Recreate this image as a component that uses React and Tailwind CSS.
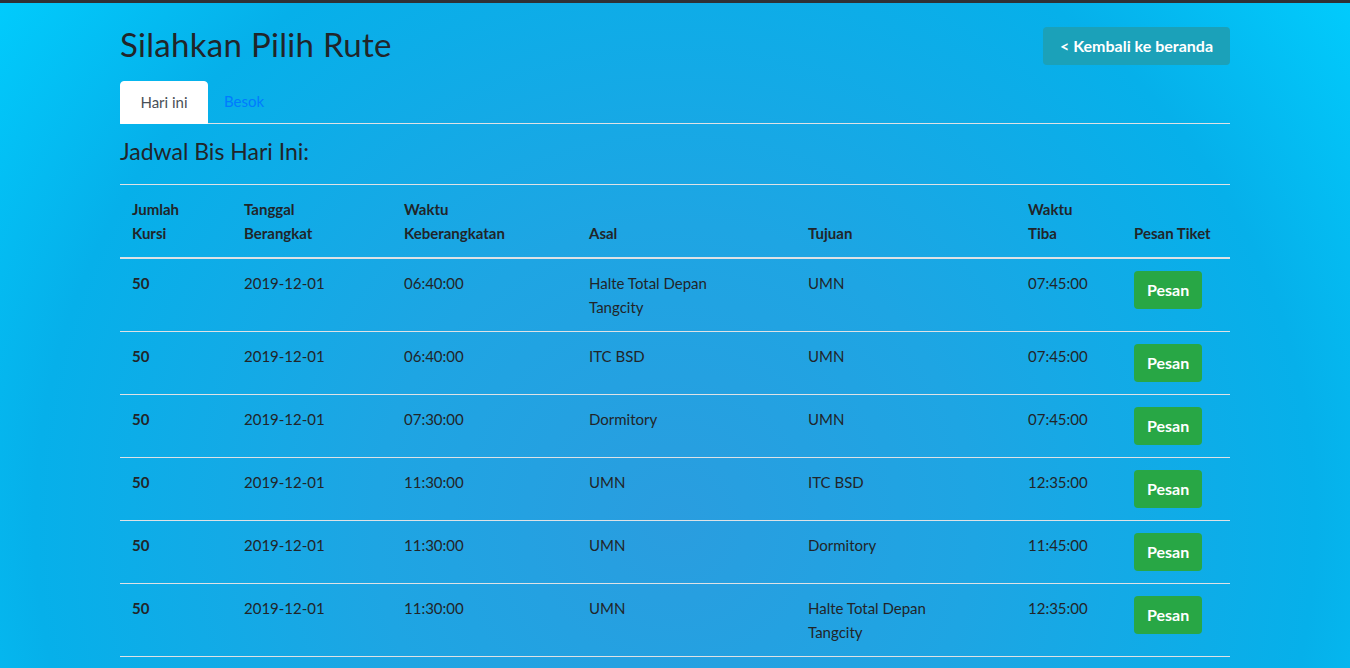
import React from "react";

const rows = [
  { kursi: 50, tanggal: "2019-12-01", berangkat: "06:40:00", asal: "Halte Total Depan Tangcity", tujuan: "UMN", tiba: "07:45:00" },
  { kursi: 50, tanggal: "2019-12-01", berangkat: "06:40:00", asal: "ITC BSD", tujuan: "UMN", tiba: "07:45:00" },
  { kursi: 50, tanggal: "2019-12-01", berangkat: "07:30:00", asal: "Dormitory", tujuan: "UMN", tiba: "07:45:00" },
  { kursi: 50, tanggal: "2019-12-01", berangkat: "11:30:00", asal: "UMN", tujuan: "ITC BSD", tiba: "12:35:00" },
  { kursi: 50, tanggal: "2019-12-01", berangkat: "11:30:00", asal: "UMN", tujuan: "Dormitory", tiba: "11:45:00" },
  { kursi: 50, tanggal: "2019-12-01", berangkat: "11:30:00", asal: "UMN", tujuan: "Halte Total Depan Tangcity", tiba: "12:35:00" },
];

export default function App() {
  return (
    <div className="min-h-screen border-t-[3px] border-[#2f3136] bg-[radial-gradient(circle_at_50%_75%,#2a9ddf_0px,#1ea5e3_300px,#06b0ea_640px,#00cfff_880px)] font-['Lato',sans-serif] text-[#212529]">
      <div className="mx-auto w-[1110px] pb-10">
        {/* Header */}
        <div className="flex items-start justify-between pt-[19px]">
          <h1 className="text-[33px] leading-[44px] font-normal tracking-[0.3px]">Silahkan Pilih Rute</h1>
          <button className="mt-[5px] h-[38px] rounded bg-[#1ba1b9] px-[17px] text-[16px] font-bold text-white">
            &lt; Kembali ke beranda
          </button>
        </div>

        {/* Tabs */}
        <div className="mt-[15px] flex border-b border-[#dee2e6] text-[15px]">
          <div className="-mb-px flex h-[43px] w-[88px] items-center justify-center rounded-t border border-white bg-white pb-px text-[#495057]">
            Hari ini
          </div>
          <div className="flex h-[42px] items-center px-4 pb-px text-[#007bff]">Besok</div>
        </div>

        <h4 className="mt-[11px] text-[23px] leading-[32px] font-normal">Jadwal Bis Hari Ini:</h4>

        {/* Table */}
        <table className="mt-[17px] w-full table-fixed border-collapse text-left text-[15px] leading-6">
          <colgroup>
            <col className="w-[112px]" />
            <col className="w-[160px]" />
            <col className="w-[185px]" />
            <col className="w-[219px]" />
            <col className="w-[220px]" />
            <col className="w-[106px]" />
            <col className="w-[108px]" />
          </colgroup>
          <thead>
            <tr className="border-t border-[#dee2e6]">
              {[["Jumlah", "Kursi"], ["Tanggal", "Berangkat"], ["Waktu", "Keberangkatan"], ["Asal"], ["Tujuan"], ["Waktu", "Tiba"], ["Pesan Tiket"]].map((h, i) => (
                <th key={i} className="border-b-2 border-[#dee2e6] p-3 align-bottom font-bold">
                  {h.map((l, j) => (
                    <div key={j}>{l}</div>
                  ))}
                </th>
              ))}
            </tr>
          </thead>
          <tbody>
            {rows.map((r, i) => (
              <tr key={i} className="border-b border-[#dee2e6] align-top">
                <td className="p-3 font-bold">{r.kursi}</td>
                <td className="p-3">{r.tanggal}</td>
                <td className="p-3">{r.berangkat}</td>
                <td className="p-3 pr-10">{r.asal}</td>
                <td className="p-3 pr-10">{r.tujuan}</td>
                <td className="p-3">{r.tiba}</td>
                <td className="p-3">
                  <button className="h-[38px] rounded bg-[#28a745] px-[13px] text-[16px] font-bold text-white">Pesan</button>
                </td>
              </tr>
            ))}
          </tbody>
        </table>
      </div>
    </div>
  );
}
